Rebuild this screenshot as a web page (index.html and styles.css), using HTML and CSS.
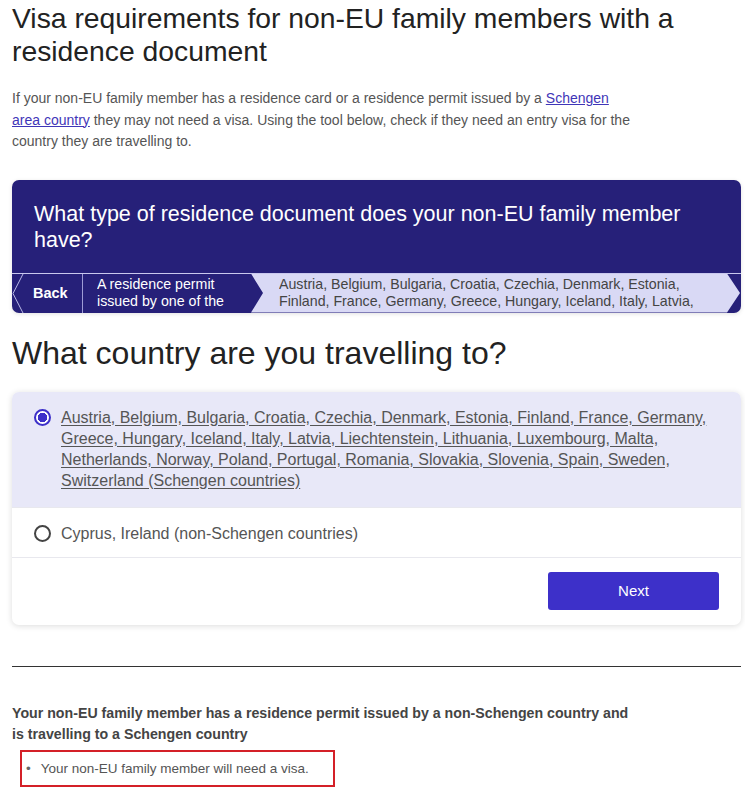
FILE: index.html
```html
<!DOCTYPE html>
<html lang="en">
<head>
    <meta charset="UTF-8">
    <meta name="viewport" content="width=device-width, initial-scale=1.0">
    <title>Visa requirements for non-EU family members</title>
    <link rel="stylesheet" href="styles.css">
</head>
<body>

    <h1 class="page-title">Visa requirements for non-EU family members with a residence document</h1>

    <p class="intro">If your non-EU family member has a residence card or a residence permit issued by a <a href="#">Schengen area country</a> they may not need a visa. Using the tool below, check if they need an entry visa for the country they are travelling to.</p>

    <!-- Previous question + breadcrumb -->
    <div class="question-card">
        <h2 class="question-title">What type of residence document does your non-EU family member have?</h2>
        <div class="crumbs">
            <a class="crumb-back" href="#">
                <svg width="12" height="39" viewBox="0 0 12 39"><polyline points="11,0 1,19.5 11,39" fill="none" stroke="#b9b8e6" stroke-width="1"/></svg>
                <span>Back</span>
            </a>
            <div class="crumb-item"><span class="crumb-text">A residence permit issued by one of the following countries</span></div>
            <div class="crumb-answer"><span class="crumb-text">Austria, Belgium, Bulgaria, Croatia, Czechia, Denmark, Estonia, Finland, France, Germany, Greece, Hungary, Iceland, Italy, Latvia, Liechtenstein, Lithuania, Luxembourg, Malta</span></div>
        </div>
    </div>

    <h2 class="step-title">What country are you travelling to?</h2>

    <!-- Options -->
    <form class="options">
        <label class="option selected">
            <input type="radio" name="country" checked>
            <span class="option-text underlined">Austria, Belgium, Bulgaria, Croatia, Czechia, Denmark, Estonia, Finland, France, Germany, Greece, Hungary, Iceland, Italy, Latvia, Liechtenstein, Lithuania, Luxembourg, Malta, Netherlands, Norway, Poland, Portugal, Romania, Slovakia, Slovenia, Spain, Sweden, Switzerland (Schengen countries)</span>
        </label>
        <label class="option">
            <input type="radio" name="country">
            <span class="option-text">Cyprus, Ireland (non-Schengen countries)</span>
        </label>
        <div class="actions">
            <button type="button" class="next-button">Next</button>
        </div>
    </form>

    <hr class="divider">

    <!-- Result -->
    <p class="result-title">Your non-EU family member has a residence permit issued by a non-Schengen country and is travelling to a Schengen country</p>
    <ul class="result-list">
        <li>Your non-EU family member will need a visa.</li>
    </ul>

</body>
</html>
```

FILE: styles.css
```css
/* Basic Reset */
* {
    margin: 0;
    padding: 0;
    box-sizing: border-box;
}

body {
    font-family: 'Liberation Sans', Arial, sans-serif;
    background: #fff;
    color: #333;
    padding: 0 4px 0 12px;
}

.page-title {
    font-size: 28.3px;
    font-weight: 400;
    line-height: 33px;
    color: #222;
    padding-top: 2px;
    max-width: 690px;
}

.intro {
    margin-top: 20px;
    font-size: 14px;
    line-height: 21.5px;
    color: #555;
    max-width: 625px;
}

.intro a {
    color: #3f36b8;
}

/* Previous question card */
.question-card {
    margin-top: 27px;
    background: #262079;
    border-radius: 7px;
    overflow: hidden;
    box-shadow: 0 1px 4px rgba(0, 0, 0, 0.12);
}

.question-title {
    color: #fff;
    font-size: 21.5px;
    font-weight: 400;
    line-height: 26px;
    padding: 21px 40px 20px 22px;
    border-bottom: 1px solid #c9c8ee;
}

.crumbs {
    display: flex;
    height: 39px;
    font-size: 14.2px;
    line-height: 17px;
}

.crumb-back {
    display: flex;
    align-items: center;
    width: 71px;
    color: #fff;
    font-weight: 700;
    font-size: 14.5px;
    text-decoration: none;
    border-right: 1px solid #9e9cd6;
}

.crumb-back svg {
    margin-right: 9px;
    flex-shrink: 0;
}

.crumb-text {
    display: block;
    max-height: 34px;
    overflow: hidden;
}

.crumb-item {
    width: 168px;
    color: #fff;
    padding: 2px 0 0 14px;
}

.crumb-answer {
    flex: 1;
    margin-right: 1px;
    background: #d9d9f5;
    color: #444;
    padding: 2px 40px 0 28px;
    clip-path: polygon(0 0, calc(100% - 13px) 0, 100% 50%, calc(100% - 13px) 100%, 0 100%, 12px 50%);
}

.step-title {
    margin-top: 22px;
    font-size: 32px;
    font-weight: 400;
    line-height: 36px;
    color: #222;
}

/* Options */
.options {
    margin-top: 21px;
    border-radius: 7px;
    background: #fff;
    box-shadow: 0 1px 6px rgba(0, 0, 0, 0.14);
    overflow: hidden;
}

.option {
    display: flex;
    align-items: flex-start;
    gap: 10px;
    padding: 15px 30px 13px 22px;
    border-bottom: 1px solid #e8e8ee;
    cursor: pointer;
}

.option.selected {
    background: #e8e8f8;
    padding-bottom: 16px;
}

.option input {
    appearance: none;
    flex-shrink: 0;
    width: 17px;
    height: 17px;
    margin-top: 2px;
    border: 2px solid #444;
    border-radius: 50%;
    background: #fff;
}

.option input:checked {
    border-color: #3d30c9;
    background: radial-gradient(circle, #3d30c9 0 4.5px, #fff 5px);
}

.option-text {
    font-size: 16px;
    line-height: 21px;
    color: #555;
}

.option-text.underlined {
    text-decoration: underline;
    text-underline-offset: 2px;
}

.actions {
    display: flex;
    justify-content: flex-end;
    padding: 14px 22px 15px;
}

.next-button {
    width: 171px;
    height: 38px;
    background: #3d30c9;
    color: #fff;
    border: none;
    border-radius: 3px;
    font-family: inherit;
    font-size: 15px;
    cursor: pointer;
}

.divider {
    margin-top: 41px;
    border: none;
    border-top: 1.5px solid #333;
}

.result-title {
    margin-top: 36px;
    font-size: 14.2px;
    font-weight: 700;
    line-height: 21px;
    color: #444;
    max-width: 630px;
}

.result-list {
    display: inline-block;
    list-style: none;
    margin: 5px 0 0 8px;
    padding: 9px 24px 9px 4px;
    border: 2px solid #d42028;
    font-size: 13.5px;
    color: #555;
}

.result-list li::before {
    content: "\2022";
    margin-right: 10px;
    color: #666;
}
```
